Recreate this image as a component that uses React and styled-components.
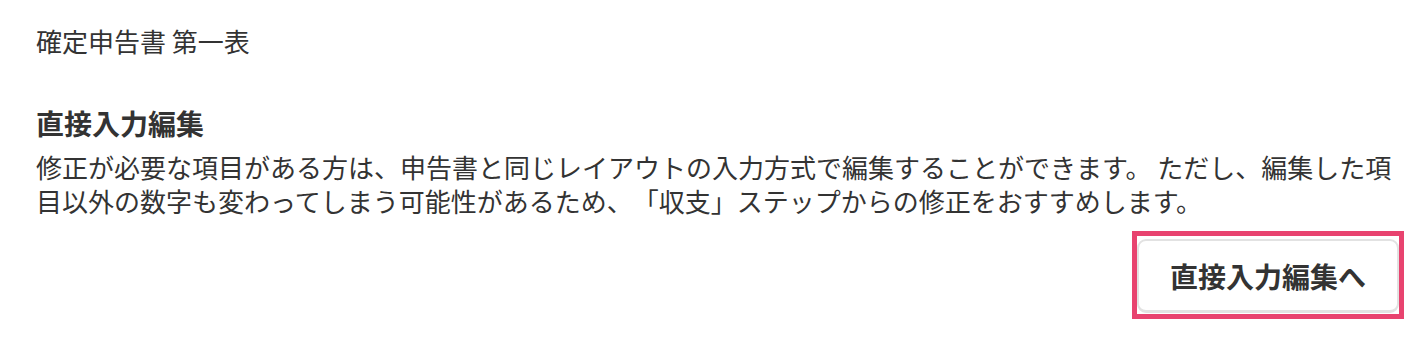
import React from 'react';
import styled, { createGlobalStyle } from 'styled-components';

const GlobalStyle = createGlobalStyle`
    html, body {
        margin: 0;
        padding: 0;
        background: #ffffff;
    }
    body {
        font-family: "Noto Sans CJK JP", "Noto Sans", sans-serif;
        color: #333333;
        text-spacing-trim: space-all;
    }
`;

const Page = styled.div`
    display: flex;
    flex-direction: column;
    padding: 24px 29px 0 36px;
`;

const SheetTitle = styled.p`
    margin: 0;
    font-size: 26px;
    line-height: 34px;
    font-weight: 400;
    color: #333333;
`;

const Section = styled.section`
    display: flex;
    flex-direction: column;
    margin-top: 47px;
`;

const SectionTitle = styled.h2`
    margin: 0;
    font-size: 28px;
    line-height: 36px;
    font-weight: 700;
    color: #333333;
`;

const Description = styled.p`
    margin: 9px 0 0 0;
    font-size: 26px;
    line-height: 34px;
    color: #333333;
    text-spacing-trim: space-all;
`;

const Actions = styled.div`
    display: flex;
    justify-content: flex-end;
    margin-top: 13px;
`;

// annotation frame around the button in the screenshot
const Highlight = styled.div`
    display: flex;
    border: 5px solid #e8436f;
    padding: 3px 0 1px 0;
    margin-right: -5px;
`;

const EditButton = styled.button`
    height: 74px;
    padding: 0 31px;
    background: #ffffff;
    border: 2px solid #e2e2e2;
    border-bottom-width: 3px;
    border-radius: 9px;
    font-family: "Noto Sans CJK JP", "Noto Sans", sans-serif;
    font-size: 28px;
    font-weight: 700;
    color: #333333;
    cursor: pointer;
`;

const App = () => {
    return (
        <>
            <GlobalStyle />
            <Page>
                <SheetTitle>確定申告書 第一表</SheetTitle>
                <Section>
                    <SectionTitle>直接入力編集</SectionTitle>
                    <Description>
                        修正が必要な項目がある方は、申告書と同じレイアウトの入力方式で編集することができます。 ただし、編集した項目以外の数字も変わってしまう可能性があるため、「収支」ステップからの修正をおすすめします。
                    </Description>
                    <Actions>
                        <Highlight>
                            <EditButton type="button">直接入力編集へ</EditButton>
                        </Highlight>
                    </Actions>
                </Section>
            </Page>
        </>
    );
};

export default App;
